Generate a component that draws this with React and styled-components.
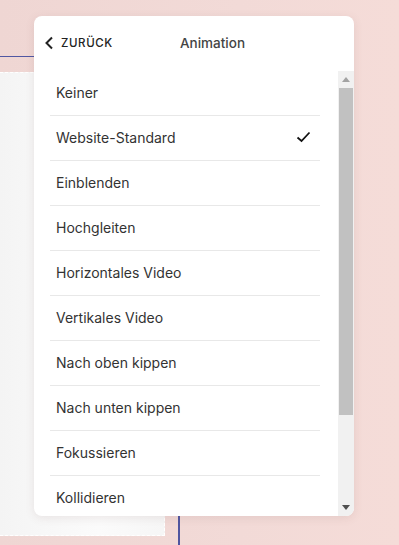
import React from "react";
import styled, { createGlobalStyle } from "styled-components";

const GlobalStyle = createGlobalStyle`
  html, body {
    margin: 0;
    padding: 0;
  }
  body {
    font-family: Inter, "Noto Sans", sans-serif;
    background: #f2dad7;
  }
`;

const items = [
  "Keiner",
  "Website-Standard",
  "Einblenden",
  "Hochgleiten",
  "Horizontales Video",
  "Vertikales Video",
  "Nach oben kippen",
  "Nach unten kippen",
  "Fokussieren",
  "Kollidieren",
];

const App = () => {
  return (
    <>
      <GlobalStyle />
      <Page>
        <GuideH />
        <Section />
        <GuideV />
        <Popover>
          <Header>
            <BackButton>
              <svg width="10" height="14" viewBox="0 0 10 14">
                <path d="M8 1.5 L2.5 7 L8 12.5" fill="none" stroke="#222" strokeWidth="2" />
              </svg>
              Zurück
            </BackButton>
            <Title>Animation</Title>
          </Header>
          <Body>
            <List>
              {items.map((label) => (
                <Row key={label}>
                  <span>{label}</span>
                  {label === "Website-Standard" && (
                    <svg width="15" height="12" viewBox="0 0 15 12">
                      <path d="M1.5 6.5 L5.5 10 L13.5 1.5" fill="none" stroke="#111" strokeWidth="1.8" />
                    </svg>
                  )}
                </Row>
              ))}
            </List>
            <ScrollTrack>
              <ArrowButton>
                <svg width="8" height="5" viewBox="0 0 8 5">
                  <path d="M0 5 L4 0 L8 5 Z" fill="#a3a3a3" />
                </svg>
              </ArrowButton>
              <ThumbArea>
                <Thumb />
              </ThumbArea>
              <ArrowButton>
                <svg width="8" height="5" viewBox="0 0 8 5">
                  <path d="M0 0 L8 0 L4 5 Z" fill="#505050" />
                </svg>
              </ArrowButton>
            </ScrollTrack>
          </Body>
        </Popover>
      </Page>
    </>
  );
};

const Page = styled.div`
  position: relative;
  width: 399px;
  height: 545px;
  overflow: hidden;
  background: linear-gradient(90deg, #efd6d3 0%, #f2dad7 60%, #f5dcd8 100%);
  display: flex;
  flex-direction: column;
`;

const GuideH = styled.div`
  margin-top: 56px;
  width: 60px;
  height: 1px;
  background: #5057a2;
`;

const Section = styled.div`
  margin-top: 15px;
  width: 165px;
  height: 464px;
  box-sizing: border-box;
  background: linear-gradient(90deg, #f4f4f4 0%, #fbfbfb 60%, #f6f6f6 100%);
  border-right: 1px dashed #ffffff;
  border-bottom: 1px dashed #ffffff;
  border-top: 1px dashed #ffffff;
`;

const GuideV = styled.div`
  position: absolute;
  left: 178px;
  top: 500px;
  width: 2px;
  height: 45px;
  background: #4f55a0;
`;

const Popover = styled.div`
  position: absolute;
  left: 34px;
  top: 16px;
  width: 320px;
  height: 500px;
  background: #fff;
  border-radius: 8px;
  box-shadow: 0 2px 10px rgba(120, 80, 80, 0.12);
  overflow: hidden;
  display: flex;
  flex-direction: column;
`;

const Header = styled.div`
  position: relative;
  height: 55px;
  flex-shrink: 0;
  display: flex;
  align-items: center;
  justify-content: center;
`;

const BackButton = styled.div`
  position: absolute;
  left: 10px;
  top: 20px;
  display: flex;
  align-items: center;
  gap: 7px;
  font-size: 11.5px;
  font-weight: 500;
  letter-spacing: 0.6px;
  text-transform: uppercase;
  color: #222;
`;

const Title = styled.div`
  margin-left: 37px;
  margin-top: -1px;
  font-size: 13.5px;
  font-weight: 500;
  color: #444;
`;

const Body = styled.div`
  flex: 1;
  display: flex;
  min-height: 0;
`;

const List = styled.div`
  flex: 1;
  padding: 0 18px 0 16px;
  overflow: hidden;
`;

const Row = styled.div`
  height: 44px;
  box-sizing: border-box;
  padding: 0 9px 2px 6px;
  height: 45px;
  border-bottom: 1px solid #e8e8e8;
  display: flex;
  align-items: center;
  justify-content: space-between;
  font-size: 14px;
  color: #333;
`;

const ScrollTrack = styled.div`
  width: 16px;
  background: #f1f1f1;
  display: flex;
  flex-direction: column;
`;

const ArrowButton = styled.div`
  height: 17px;
  display: flex;
  align-items: center;
  justify-content: center;
`;

const ThumbArea = styled.div`
  flex: 1;
  padding: 0 1px;
`;

const Thumb = styled.div`
  height: 327px;
  background: #c1c1c1;
`;

export default App;
